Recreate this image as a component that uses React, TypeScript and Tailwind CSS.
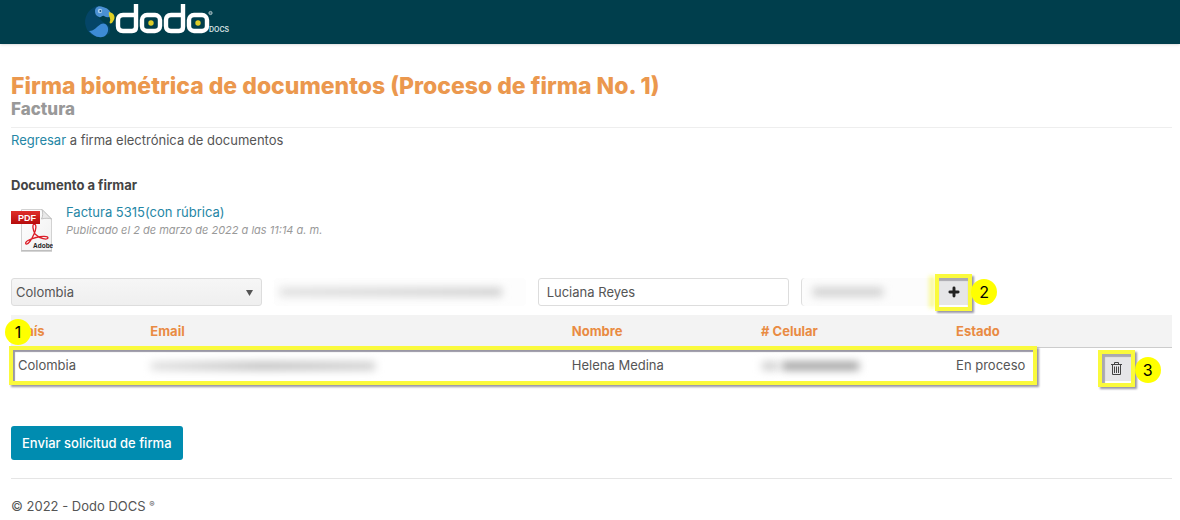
import { Plus } from "lucide-react";

const headers = ["Email", "Nombre", "# Celular", "Estado"];

function Logo() {
  return (
    <svg width="150" height="36" viewBox="82 1 150 36" role="img" aria-label="dodo DOCS" className="block overflow-visible">
      <path d="M97 6C88 9 83 18 86 27C88 34 95 37 99 37L109 34C112 29 109 25 103 22L98 17Z" fill="#064873" opacity=".7" />
      <path d="M95 11C95 7 99 5 103 7C107 8 110 10 111 14C111 18 107 18 104 16C102 15 101 18 99 17C96 16 95 14 95 11Z" fill="#4a90d4" />
      <path d="M101 24C105 22 109 26 108 31C107 35 104 38 99 37C96 37 93 35 89 31C95 31 97 26 101 24Z" fill="#3d8bd6" />
      <path d="M109 12C114 13 117 17 112 23C110 24 109 23 110 21C111 18 108 16 109 12Z" fill="#e0d024" />
      <circle cx="100" cy="11" r="2.2" fill="#a9d0f0" />
      <circle cx="100.4" cy="11" r="1" fill="#164b7c" />
      <g fill="none" stroke="#fff" strokeWidth="4.400">
        <path d="M136 4V27Q136 31 132 31H123Q118 31 118 26V20Q118 15 123 15H134" />
        <rect x="142" y="15" width="18" height="16" rx="5" />
        <path d="M183 4V27Q183 31 179 31H171Q166 31 166 26V20Q166 15 171 15H181" />
        <rect x="189" y="15" width="18" height="16" rx="5" />
      </g>
      <circle cx="151" cy="23" r="2.700" fill="#dfce28" />
      <circle cx="198" cy="23" r="2.700" fill="#dfce28" />
      <circle cx="210.5" cy="13" r="1.600" fill="#4b7580" stroke="#a8c0c5" />
      <text x="209" y="32" fill="#d5e0e2" fontSize="7" fontFamily="Inter, sans-serif" fontWeight="600">DOCS</text>
    </svg>
  );
}

function PdfIcon() {
  return (
    <svg width="42" height="44" viewBox="0 0 42 44" aria-hidden="true" className="shrink-0">
      <defs>
        <linearGradient id="red" x2="0" y2="1"><stop stopColor="#e0302b" /><stop offset="1" stopColor="#b50c0c" /></linearGradient>
        <linearGradient id="paper" x2="1" y2="1"><stop stopColor="#fff" /><stop offset="1" stopColor="#f0f0f0" /></linearGradient>
      </defs>
      <path d="M10.500 1.500H31L40.500 11V42.500H10.500Z" fill="url(#paper)" stroke="#d2d2d2" />
      <path d="M10 43H41" stroke="#aaa" />
      <path d="M31 1.500C32 5 32 8 30.500 11C34 10 38 10 40.500 11Z" fill="#e9e9e9" stroke="#b5b5b5" strokeWidth=".8" />
      <path d="M24 26C22 22 21 17 23 16C26 16 25 22 23 26C21 31 17 37 15 36C13 34 19 31 25 29.500C31 28 37 28 37 30C36 32 29 31 24 26Z" fill="none" stroke="#dc1d28" strokeWidth="1.300" />
      <rect y="3" width="29" height="13" fill="url(#red)" />
      <text x="7" y="13" fill="#fff" fontSize="9" fontWeight="700" fontFamily="Liberation Sans, sans-serif">PDF</text>
      <text x="22" y="40" fill="#222" fontSize="6.500" fontWeight="700" fontFamily="Liberation Sans, sans-serif">Adobe</text>
    </svg>
  );
}

function TrashIcon() {
  return (
    <svg width="11" height="13" viewBox="0 0 11 13" fill="none" stroke="#444" aria-hidden="true">
      <path d="M0 2.500H11M3.500 2.500V.5H7.500V2.500M1.500 3V12.500H9.500V3M3.500 4.500V11M5.500 4.500V11M7.500 4.500V11" />
    </svg>
  );
}

const badge = "absolute flex size-[26px] items-center justify-center rounded-full bg-[#ffff00] text-base font-normal text-black";
const frame = "border-4 border-[#fafa3c] shadow-[2px_2px_2px_#9997a5,inset_2px_2px_1px_#9997a5]";
const smudge = "pointer-events-none absolute h-2 blur-[4px]";

export default function App() {
  return (
    <div className="min-h-screen bg-white font-['Inter',sans-serif] text-[13px] leading-5 text-[#555]">
      <header className="flex h-11 items-start bg-[#003e4c] pt-px pl-[82px] shadow-sm"><Logo /></header>
      <main className="pt-[29px] pr-2 pl-[11px]">
        <div className="border-b border-[#eee] pb-2">
          <h1 className="text-[23px] leading-[26px] font-extrabold text-[#eb984e]">Firma biométrica de documentos (Proceso de firma No. 1)</h1>
          <h2 className="text-[17px] leading-5 font-extrabold text-[#999]">Factura</h2>
        </div>
        <p className="pt-[2px]"><a href="#documentos" className="text-[#2586a5]">Regresar</a> a firma electrónica de documentos</p>
        <h3 className="mt-[25px] text-[13px] font-bold text-[#444]">Documento a firmar</h3>
        <div className="mt-[7px] flex h-[50px] gap-[13px]">
          <div className="flex items-end"><PdfIcon /></div>
          <div>
            <a href="#factura" className="block text-[#2586a5]">Factura 5315(con rúbrica)</a>
            <p className="text-[11px] leading-4 text-[#999] italic">Publicado el 2 de marzo de 2022 a las 11:14 a. m.</p>
          </div>
        </div>
        <form id="firma" onSubmit={(e) => e.preventDefault()} className="mt-5 flex h-10 items-center">
          <div className="grid flex-[925] grid-cols-[251fr_251fr_251fr_134fr] gap-3">
            <div className="relative">
              <select aria-label="País" className="h-7 w-full appearance-none rounded-[3px] border border-[#ddd] bg-linear-to-b from-[#f6f6f6] to-[#efefef] px-1"><option>Colombia</option></select>
              <svg width="7" height="6" viewBox="0 0 7 6" aria-hidden="true" className="pointer-events-none absolute top-3 right-[9px]"><path d="M0 0H7L3.500 6Z" fill="#555" /></svg>
            </div>
            <div className="relative">
              <input aria-label="Email" className="h-7 w-full rounded bg-[#fdfdfd]" />
              <span className={`${smudge} top-2.5 right-6 left-1.5 bg-linear-to-r from-[#ddd] to-[#ccc]`} />
            </div>
            <input aria-label="Nombre" defaultValue="Luciana Reyes" className="h-7 w-full rounded-[3px] border border-[#ddd] px-2" />
            <div className="relative">
              <input aria-label="Celular" className="h-7 w-full rounded border-l border-[#ddd] bg-[#fcfcfc]" />
              <span className={`${smudge} top-2.5 right-[52px] left-3 bg-[#ccc]`} />
              <span className="pointer-events-none absolute -top-0.5 right-0 h-8 w-1.5 bg-[#fafa3c]/50 blur-[2px]" />
            </div>
          </div>
          <div className={`${frame} relative size-[37px]`}>
            <button type="submit" aria-label="Agregar" className="flex size-full items-center justify-center bg-[#e6e6e8] text-[#222] shadow-[inset_0_3px_1px_#aaa9b0,inset_0_-2px_0_#fff]"><Plus size={14} strokeWidth={5} /></button>
            <span className={`${badge} top-[1px] left-8`}>2</span>
          </div>
          <div className="flex-[200]" />
        </form>
        <div className="relative mt-[3px]">
          <table className="w-full table-fixed border-collapse text-left">
            <colgroup><col className="w-[11.4%]" /><col className="w-[36.3%]" /><col className="w-[16.3%]" /><col className="w-[16.8%]" /><col className="w-[12.2%]" /><col /></colgroup>
            <thead className="h-8 border-b border-[#ccc] bg-[#f3f3f3] text-[#e98b43]">
              <tr>
                <th className="px-[7px]">País</th>
                {headers.map((h) => <th key={h} className="px-[7px]">{h}</th>)}
                <td />
              </tr>
            </thead>
            <tbody>
              <tr className="h-10 align-top">
                <td className="px-[7px] pt-[7px]">Colombia</td>
                <td className="relative"><span className={`${smudge} top-3.5 right-[45%] left-2 bg-linear-to-r from-[#ddd] via-[#bbb] to-[#ccc]`} /></td>
                <td className="px-[7px] pt-[7px]">Helena Medina</td>
                <td className="relative">
                  <span className={`${smudge} top-3.5 left-2 w-4 bg-[#ccc]`} />
                  <span className={`${smudge} top-3.5 right-[46%] left-7 bg-[#999]`} />
                </td>
                <td className="px-[7px] pt-[7px]">En proceso</td>
                <td className="px-[7px] pt-0.5">
                  <div className={`${frame} relative size-[37px]`}>
                    <button type="button" aria-label="Eliminar" className="flex size-full items-center justify-center bg-[#e6e6e8] shadow-[inset_3px_3px_1px_#aaa9b0,inset_0_-2px_0_#fff]"><TrashIcon /></button>
                    <span className={`${badge} top-[3px] left-[33px]`}>3</span>
                  </div>
                </td>
              </tr>
            </tbody>
          </table>
          <div className={`${frame} pointer-events-none absolute top-[31px] right-[11.6%] -left-0.5 h-[39px]`} />
          <span className={`${badge} top-1 left-[-6px]`}>1</span>
        </div>
        <button form="firma" type="submit" className="mt-[39px] h-[34px] rounded-[3px] bg-[#008cb0] px-[11px] font-medium text-white">Enviar solicitud de firma</button>
        <footer className="mt-[18px] border-t border-[#e5e5e5] pt-[17px]">© 2022 - Dodo DOCS <sup className="text-[8px]">®</sup></footer>
      </main>
    </div>
  );
}
